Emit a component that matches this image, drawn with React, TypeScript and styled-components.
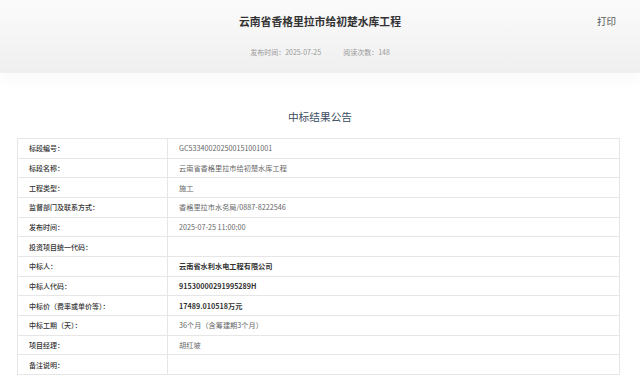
import React, { FC } from 'react';
import styled, { createGlobalStyle } from 'styled-components';

const GlobalStyle = createGlobalStyle`
  html, body {
    margin: 0;
    padding: 0;
    background: #fff;
  }
  body {
    font-family: "Noto Sans CJK SC", "Noto Sans", "Liberation Sans", sans-serif;
    color: #333;
  }
`;

const Header = styled.header`
  height: 73px;
  box-sizing: border-box;
  padding-top: 14px;
  background: linear-gradient(180deg, #fbfbfb 0%, #efefef 100%);
  box-shadow: 0 8px 14px rgba(0, 0, 0, 0.025);
`;

const TopRow = styled.div`
  display: grid;
  grid-template-columns: 1fr auto 1fr;
  align-items: center;
`;

const Title = styled.h1`
  margin: 0;
  font-size: 10.8px;
  line-height: 14px;
  font-weight: 700;
  color: #333;
  white-space: nowrap;
`;

const PrintButton = styled.span`
  justify-self: end;
  padding-right: 24px;
  font-size: 9.5px;
  line-height: 14px;
  color: #555;
  cursor: pointer;
`;

const MetaRow = styled.div`
  display: flex;
  justify-content: center;
  gap: 22px;
  margin-top: 19px;
  font-size: 7px;
  line-height: 10px;
  color: #999;
`;

const Heading = styled.h2`
  margin: 37px 0 14px;
  text-align: center;
  font-size: 10.7px;
  line-height: 14px;
  font-weight: 400;
  color: #3b4d61;
`;

const Table = styled.div`
  margin: 0 20px 0 17px;
  border: 1px solid #e6e6e6;
  border-bottom: none;
`;

const Row = styled.div`
  display: grid;
  grid-template-columns: 150px 1fr;
  height: 19.67px;
  box-sizing: border-box;
  border-bottom: 1px solid #e6e6e6;
`;

const Label = styled.div`
  display: flex;
  align-items: center;
  padding-left: 11px;
  border-right: 1px solid #e6e6e6;
  font-size: 7px;
  font-weight: 500;
  color: #333;
  white-space: nowrap;
`;

const Value = styled.div<{ $strong?: boolean }>`
  display: flex;
  align-items: center;
  padding-left: 11px;
  font-size: 7.2px;
  font-weight: ${p => (p.$strong ? 700 : 400)};
  color: ${p => (p.$strong ? '#333' : '#666')};
  white-space: nowrap;
`;

const rows: { label: string; value: string; strong?: boolean }[] = [
  { label: '标段编号：', value: 'GC533400202500151001001' },
  { label: '标段名称：', value: '云南省香格里拉市给初楚水库工程' },
  { label: '工程类型：', value: '施工' },
  { label: '监督部门及联系方式：', value: '香格里拉市水务局/0887-8222546' },
  { label: '发布时间：', value: '2025-07-25 11:00:00' },
  { label: '投资项目统一代码：', value: '' },
  { label: '中标人：', value: '云南省水利水电工程有限公司', strong: true },
  { label: '中标人代码：', value: '91530000291995289H', strong: true },
  { label: '中标价（费率或单价等）：', value: '17489.010518万元', strong: true },
  { label: '中标工期（天）：', value: '36个月（含筹建期3个月）' },
  { label: '项目经理：', value: '胡红坡' },
  { label: '备注说明：', value: '' },
];

const App: FC = () => {
  return (
    <>
      <GlobalStyle />
      <Header>
        <TopRow>
          <div />
          <Title>云南省香格里拉市给初楚水库工程</Title>
          <PrintButton>打印</PrintButton>
        </TopRow>
        <MetaRow>
          <span>发布时间：2025-07-25</span>
          <span>阅读次数：148</span>
        </MetaRow>
      </Header>
      <Heading>中标结果公告</Heading>
      <Table>
        {rows.map(r => (
          <Row key={r.label}>
            <Label>{r.label}</Label>
            <Value $strong={r.strong}>{r.value}</Value>
          </Row>
        ))}
      </Table>
    </>
  );
};

export default App;
